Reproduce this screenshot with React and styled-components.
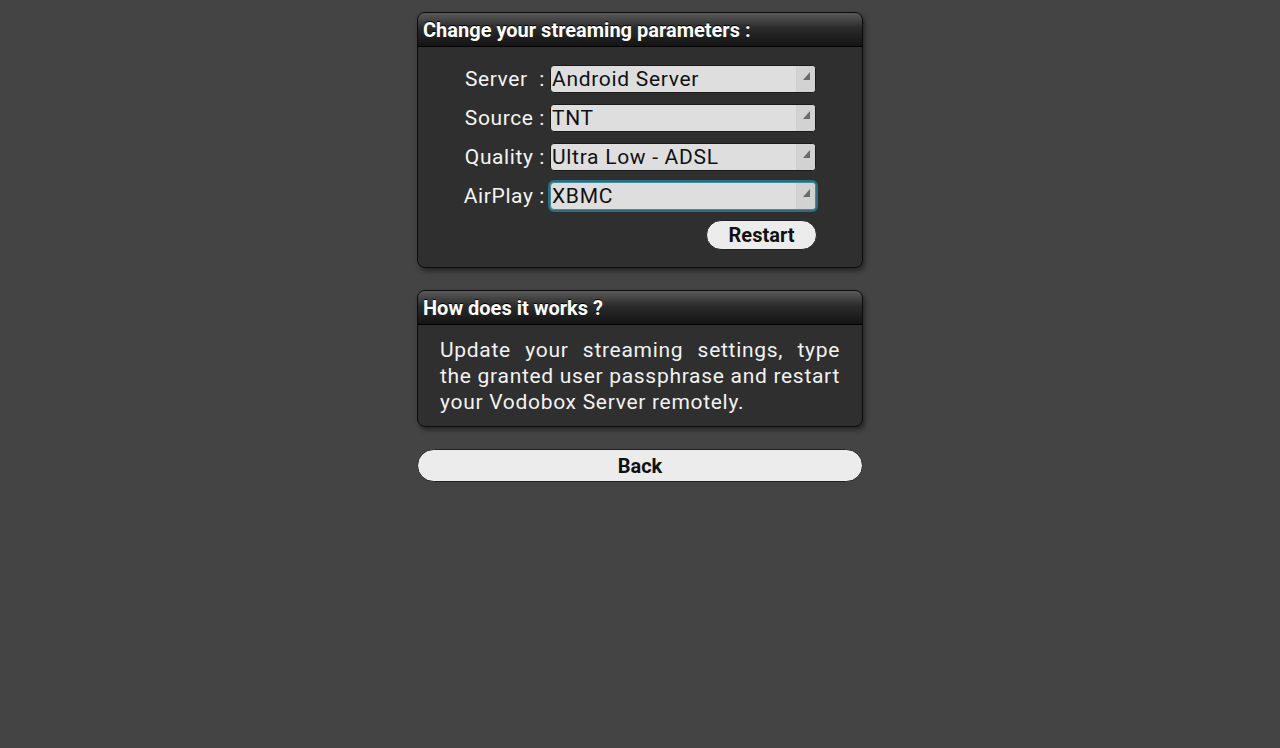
import React from "react";
import styled, { createGlobalStyle } from "styled-components";

const Global = createGlobalStyle`
  html, body { margin: 0; padding: 0; background: #444444; }
  body { font-family: Roboto, "Noto Sans", sans-serif; }
`;

const Page = styled.div`
  width: 446px;
  margin: 0 auto;
  padding-top: 12px;
  display: flex;
  flex-direction: column;
  gap: 22px;
`;

const Panel = styled.section`
  border: 1px solid #0c0c0c;
  border-radius: 8px;
  background: #2f2f2f;
  box-shadow: 2px 3px 5px rgba(0, 0, 0, 0.45);
  overflow: hidden;
`;

const Header = styled.h2`
  margin: 0;
  height: 34px;
  box-sizing: border-box;
  padding: 0 5px;
  display: flex;
  align-items: center;
  font-size: 20px;
  font-weight: 700;
  color: #ffffff;
  letter-spacing: 0;
  background: linear-gradient(#5a5a5a 0%, #2b2b2b 45%, #141414 100%);
  border-bottom: 1px solid #000;
  text-shadow: 0 -1px 0 #000;
`;

const FormBody = styled.div`
  padding: 12px 45px 17px 45px;
  display: flex;
  flex-direction: column;
`;

const Row = styled.div`
  display: grid;
  grid-template-columns: 82px 266px;
  column-gap: 5px;
  align-items: center;
  height: 39px;
`;

const Label = styled.label`
  font-size: 21px;
  letter-spacing: 0.6px;
  color: #f4f4f4;
  text-align: right;
  white-space: pre;
`;

const Select = styled.div`
  position: relative;
  height: 28px;
  box-sizing: border-box;
  border: 1px solid ${(p) => (p.$focus ? "#3c8aa0" : "#1a1a1a")};
  box-shadow: ${(p) => (p.$focus ? "0 0 0 2px #2f6d7e" : "none")};
  border-radius: 4px;
  background: #dedede;
  display: flex;
  align-items: center;
  padding-left: 1px;
  font-size: 21px;
  letter-spacing: 0.7px;
  color: #111;
  overflow: hidden;
`;

const Arrow = styled.span`
  position: absolute;
  right: 0;
  top: 0;
  bottom: 0;
  width: 18px;
  background: #d2d2d2;
  border-left: 1px solid #cfcfcf;
  &::after {
    content: "";
    position: absolute;
    right: 5px;
    top: 6px;
    width: 0;
    height: 0;
    border-left: 7px solid transparent;
    border-bottom: 8px solid #6a6a6a;
  }
`;

const Actions = styled.div`
  display: flex;
  justify-content: flex-end;
  padding-top: 5px;
`;

const PillButton = styled.button`
  font-family: Roboto, "Noto Sans", sans-serif;
  font-size: 20px;
  font-weight: 700;
  color: #111;
  background: #ececec;
  border: 1px solid #222;
  border-radius: 999px;
  height: ${(p) => (p.$tall ? "33px" : "30px")};
  width: ${(p) => (p.$full ? "100%" : "111px")};
  padding: 0;
  cursor: pointer;
`;

const TextBody = styled.p`
  margin: 0;
  padding: 12px 22px 11px 22px;
  font-size: 21px;
  line-height: 26px;
  letter-spacing: 0.7px;
  color: #f2f2f2;
  text-align: justify;
`;

const fields = [
  { label: "Server  :", value: "Android Server" },
  { label: "Source :", value: "TNT" },
  { label: "Quality :", value: "Ultra Low - ADSL" },
  { label: "AirPlay :", value: "XBMC", focus: true },
];

export default function App() {
  return (
    <>
      <Global />
      <Page>
        <Panel>
          <Header>Change your streaming parameters :</Header>
          <FormBody>
            {fields.map((f) => (
              <Row key={f.label}>
                <Label>{f.label}</Label>
                <Select $focus={f.focus}>
                  {f.value}
                  <Arrow />
                </Select>
              </Row>
            ))}
            <Actions>
              <PillButton>Restart</PillButton>
            </Actions>
          </FormBody>
        </Panel>
        <Panel>
          <Header>How does it works ?</Header>
          <TextBody>
            Update your streaming settings, type the granted user passphrase and restart your Vodobox Server remotely.
          </TextBody>
        </Panel>
        <PillButton $full $tall>Back</PillButton>
      </Page>
    </>
  );
}
